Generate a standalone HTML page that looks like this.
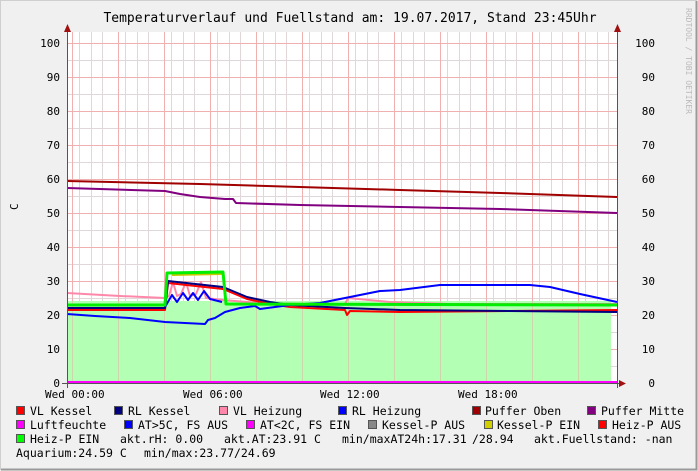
<!DOCTYPE html><html><head><meta charset="utf-8"><style>
body{margin:0;background:#f0f0f0}
svg{display:block;font-family:"DejaVu Sans Mono","Liberation Mono",monospace}
</style></head><body>
<svg width="698" height="471" viewBox="0 0 698 471" xmlns="http://www.w3.org/2000/svg">
<rect width="698" height="471" fill="#f0f0f0"/>
<path d="M0.5 470V0.5H697" stroke="#cfcfcf" fill="none"/>
<path d="M1 469.5H696.5V1" stroke="#9a9a9a" stroke-width="2" fill="none"/>
<text x="350" y="22" font-size="13" text-anchor="middle" fill="#000">Temperaturverlauf und Fuellstand am: 19.07.2017, Stand 23:45Uhr</text>
<text transform="translate(686,8) rotate(90)" font-size="8" fill="#bbb">RRDTOOL / TOBI OETIKER</text>
<rect x="67" y="32" width="550" height="351" fill="#fff"/>
<g stroke="#e0d8d8" stroke-width="1">
<path d="M79.5 32V383M91.5 32V383M102.5 32V383M125.5 32V383M137.5 32V383M148.5 32V383M171.5 32V383M183.5 32V383M194.5 32V383M217.5 32V383M229.5 32V383M240.5 32V383M263.5 32V383M275.5 32V383M286.5 32V383M309.5 32V383M321.5 32V383M332.5 32V383M355.5 32V383M367.5 32V383M378.5 32V383M401.5 32V383M413.5 32V383M424.5 32V383M447.5 32V383M459.5 32V383M470.5 32V383M493.5 32V383M505.5 32V383M516.5 32V383M539.5 32V383M551.5 32V383M562.5 32V383M585.5 32V383M597.5 32V383M608.5 32V383"/>
<path d="M67 366.5H617M67 332.5H617M67 298.5H617M67 264.5H617M67 230.5H617M67 196.5H617M67 162.5H617M67 128.5H617M67 94.5H617M67 60.5H617"/>
</g>
<g stroke="#f0b0b0" stroke-width="1">
<path d="M72.5 32V383M118.5 32V383M164.5 32V383M210.5 32V383M256.5 32V383M302.5 32V383M348.5 32V383M394.5 32V383M440.5 32V383M486.5 32V383M532.5 32V383M578.5 32V383"/>
<path d="M67 349.5H617M67 315.5H617M67 281.5H617M67 247.5H617M67 213.5H617M67 179.5H617M67 145.5H617M67 111.5H617M67 77.5H617M67 43.5H617"/>
</g>
<path d="M67 383V301H611V383Z" fill="#b3ffb3"/>
<g stroke="#e0b8a8" stroke-width="1" opacity="0.6">
<path d="M72.5 301V383M118.5 301V383M164.5 301V383M210.5 301V383M256.5 301V383M302.5 301V383M348.5 301V383M394.5 301V383M440.5 301V383M486.5 301V383M532.5 301V383M578.5 301V383"/>
</g>
<g fill="none" stroke-width="2" stroke-linejoin="round">
<path stroke="#a00000" d="M67 181L200 184L300 187L400 190L500 193L617 197"/>
<path stroke="#800080" d="M67 188L165 191L180 194L200 197L225 199L233 199L236 203L300 205L400 207L500 209L617 213"/>
<path stroke="#ff88aa" d="M67 293L120 296L165 298L169 296L173 282L177 296L181 294L186 282L190 296L196 294L201 282L206 298L223 300L260 303L300 304L345 304L348 298L390 302L450 304L617 304"/>
<path stroke="#ff0000" d="M67 310L165 310L168 283L223 289L247 299L270 304L290 307L345 310L347 315L350 311L400 312L617 310"/>
<path stroke="#000080" d="M67 308L165 308L168 281L223 287L247 297L270 302L290 305L345 308L400 310L617 312"/>
<path stroke="#0000ff" d="M67 314L95 316L130 318L165 322L205 324L208 320L215 318L225 312L240 308L255 306L260 309L290 305L320 303L340 299L380 291L400 290L440 285L530 285L550 287L580 294L617 302"/>
<path stroke="#0000ff" d="M165 307L172 295L177 302L183 293L188 300L193 293L198 300L204 291L210 299L222 302"/>
<path stroke="#c8c800" d="M172 275L222 274"/>
<path stroke="#00ee00" stroke-width="3" d="M67 305L165 305L167 273L223 272L226 304L617 305"/>
<path stroke="#ff00ff" d="M67 382H617"/>
</g>
<path d="M67.5 28V388M617.5 28V388M62 383.5H623" stroke="#555" stroke-width="1"/>
<path d="M64 32L67.5 24L71 32ZM614 32L617.5 24L621 32ZM619 380L626 383.5L619 387Z" fill="#a01010"/>
<g font-size="11" fill="#000">
<g text-anchor="end">
<text x="60" y="47">100</text><text x="60" y="81">90</text><text x="60" y="115">80</text><text x="60" y="149">70</text><text x="60" y="183">60</text><text x="60" y="217">50</text><text x="60" y="251">40</text><text x="60" y="285">30</text><text x="60" y="319">20</text><text x="60" y="353">10</text><text x="60" y="387">0</text>
<text x="655" y="47">100</text><text x="655" y="81">90</text><text x="655" y="115">80</text><text x="655" y="149">70</text><text x="655" y="183">60</text><text x="655" y="217">50</text><text x="655" y="251">40</text><text x="655" y="285">30</text><text x="655" y="319">20</text><text x="655" y="353">10</text><text x="655" y="387">0</text>
</g>
<text transform="translate(18,210) rotate(-90)">C</text>
<text x="45" y="398">Wed 00:00</text><text x="183" y="398">Wed 06:00</text><text x="320" y="398">Wed 12:00</text><text x="458" y="398">Wed 18:00</text>
</g>
<g font-size="11.5" fill="#000" stroke-width="1">
<g stroke="#555">
<rect x="16.5" y="406.5" width="8" height="8" fill="#f00"/>
<rect x="114.5" y="406.5" width="8" height="8" fill="#000080"/>
<rect x="219.5" y="406.5" width="8" height="8" fill="#ff88aa"/>
<rect x="338.5" y="406.5" width="8" height="8" fill="#00f"/>
<rect x="472.5" y="406.5" width="8" height="8" fill="#a00000"/>
<rect x="587.5" y="406.5" width="8" height="8" fill="#800080"/>
<rect x="16.5" y="420.5" width="8" height="8" fill="#f0f"/>
<rect x="124.5" y="420.5" width="8" height="8" fill="#00f"/>
<rect x="246.5" y="420.5" width="8" height="8" fill="#f0f"/>
<rect x="368.5" y="420.5" width="8" height="8" fill="#888"/>
<rect x="484.5" y="420.5" width="8" height="8" fill="#d0d000"/>
<rect x="598.5" y="420.5" width="8" height="8" fill="#f00"/>
<rect x="16.5" y="434.5" width="8" height="8" fill="#0f0"/>
</g>
<text x="30" y="415">VL Kessel</text><text x="128" y="415">RL Kessel</text><text x="233" y="415">VL Heizung</text><text x="352" y="415">RL Heizung</text><text x="485" y="415">Puffer Oben</text><text x="601" y="415">Puffer Mitte</text>
<text x="30" y="429">Luftfeuchte</text><text x="138" y="429">AT&gt;5C, FS AUS</text><text x="260" y="429">AT&lt;2C, FS EIN</text><text x="382" y="429">Kessel-P AUS</text><text x="497" y="429">Kessel-P EIN</text><text x="612" y="429">Heiz-P AUS</text>
<text x="30" y="443">Heiz-P EIN</text><text x="120" y="443">akt.rH: 0.00</text><text x="224" y="443">akt.AT:23.91 C</text><text x="342" y="443">min/maxAT24h:17.31</text><text x="472" y="443">/28.94</text><text x="534" y="443">akt.Fuellstand: -nan</text>
<text x="16" y="457">Aquarium:24.59 C</text><text x="144" y="457">min/max:23.77/24.69</text>
</g>
</svg>
</body></html>
